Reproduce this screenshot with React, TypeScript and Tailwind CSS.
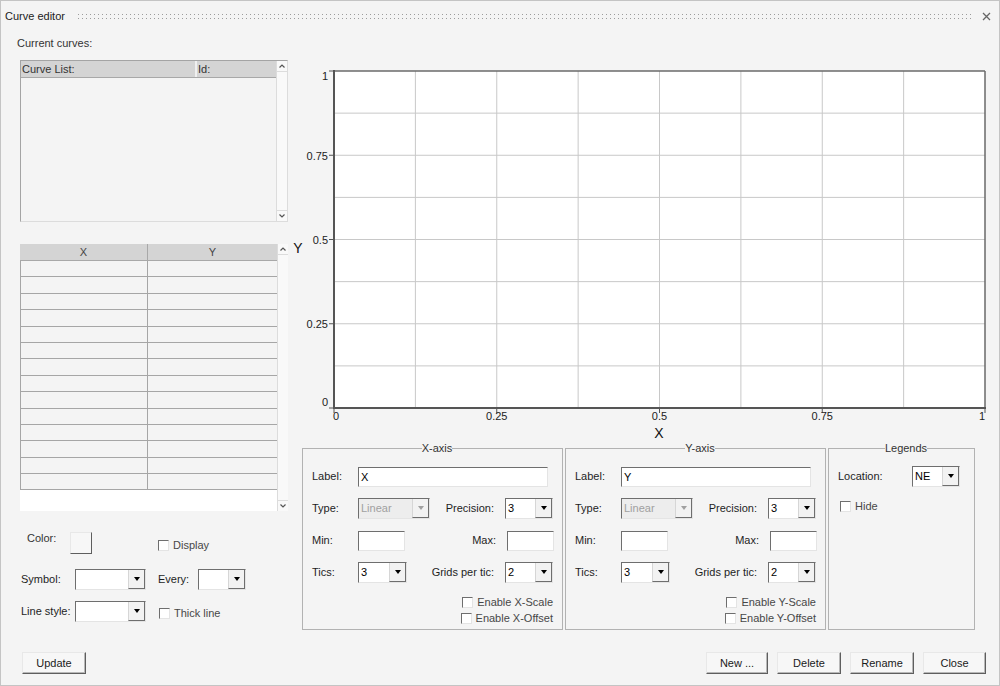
import React from 'react'

const sunken = 'border border-t-[#6e6e6e] border-l-[#6e6e6e] border-r-[#e4e4e4] border-b-[#e4e4e4]'

function Arrow({ disabled = false }: { disabled?: boolean }) {
  return (
    <span
      className={`inline-block border-x-[3.5px] border-t-[4px] border-x-transparent ${disabled ? 'border-t-[#a0a0a0]' : 'border-t-black'}`}
    />
  )
}

function Combo({ className = '', value = '', disabled = false }: { className?: string; value?: string; disabled?: boolean }) {
  return (
    <div className={`flex h-[21px] ${sunken} ${disabled ? 'bg-[#ededed]' : 'bg-white'} ${className}`}>
      <span className={`flex-1 pl-[2px] text-[11px] leading-[19px] ${disabled ? 'text-[#a0a0a0]' : 'text-black'}`}>{value}</span>
      <span className="flex w-[17px] items-center justify-center border-l border-r border-b border-l-[#d6d6d6] border-r-[#6e6e6e] border-b-[#6e6e6e] bg-[#f2f2f2]">
        <Arrow disabled={disabled} />
      </span>
    </div>
  )
}

function Field({ className = '', value = '' }: { className?: string; value?: string }) {
  return (
    <div className={`h-[20px] bg-white ${sunken} pl-[2px] text-[11px] leading-[18px] text-black ${className}`}>{value}</div>
  )
}

function Check({ label, className = '' }: { label: string; className?: string }) {
  return (
    <div className={`flex items-center ${className}`}>
      <span className={`h-[11px] w-[11px] bg-white ${sunken}`} />
      <span className="ml-[4px] text-[11px] leading-[13px] text-[#474747]">{label}</span>
    </div>
  )
}

function Button({ label, className = '' }: { label: string; className?: string }) {
  return (
    <button className={`h-[22px] border border-t-[#e8e8e8] border-l-[#e8e8e8] border-r-[#5e5e5e] border-b-[#5e5e5e] bg-[#f7f7f7] text-[11px] text-[#1a1a1a] shadow-[inset_-1px_-1px_0_#b8b8b8] ${className}`}>
      {label}
    </button>
  )
}

function VScroll() {
  return (
    <div className="flex w-[11px] flex-col border-l border-[#dcdcdc] bg-[#f9f9f9]">
      <div className="flex h-[11px] items-center justify-center border-b border-[#dcdcdc]">
        <svg width="6" height="4" viewBox="0 0 6 4"><path d="M0.5 3.5 L3 1 L5.5 3.5" fill="none" stroke="#555" strokeWidth="1.2" /></svg>
      </div>
      <div className="flex-1" />
      <div className="flex h-[11px] items-center justify-center border-t border-[#dcdcdc]">
        <svg width="6" height="4" viewBox="0 0 6 4"><path d="M0.5 0.5 L3 3 L5.5 0.5" fill="none" stroke="#555" strokeWidth="1.2" /></svg>
      </div>
    </div>
  )
}

function Chart() {
  const L = 43
  const T = 10
  const R = 694
  const B = 347
  const xs = Array.from({ length: 9 }, (_, i) => L + ((R - L) * i) / 8)
  const ys = Array.from({ length: 9 }, (_, i) => T + ((B - T) * i) / 8)
  const yLabels = [
    { t: '1', y: 19 },
    { t: '0.75', y: 99 },
    { t: '0.5', y: 183 },
    { t: '0.25', y: 267 },
    { t: '0', y: 345 },
  ]
  const xLabels = [
    { t: '0', x: 45 },
    { t: '0.25', x: xs[2] },
    { t: '0.5', x: xs[4] },
    { t: '0.75', x: xs[6] },
    { t: '1', x: 691 },
  ]
  return (
    <svg width="710" height="380" className="block" fontFamily="'Liberation Sans', Arial, sans-serif">
      <rect x={L} y={T} width={R - L} height={B - T} fill="#ffffff" />
      {xs.slice(1, 8).map((x, i) => (
        <line key={'gx' + i} x1={x} y1={T} x2={x} y2={B} stroke="#c8c8c8" strokeWidth="1" />
      ))}
      {ys.slice(1, 8).map((y, i) => (
        <line key={'gy' + i} x1={L} y1={y} x2={R} y2={y} stroke="#c8c8c8" strokeWidth="1" />
      ))}
      <line x1={L} y1={T} x2={R} y2={T} stroke="#6a6a6a" strokeWidth="1.5" />
      <line x1={R} y1={T} x2={R} y2={B} stroke="#6a6a6a" strokeWidth="1.5" />
      <line x1={L} y1={T - 1} x2={L} y2={B + 1} stroke="#555" strokeWidth="2" />
      <line x1={L - 1} y1={B} x2={R + 1} y2={B} stroke="#555" strokeWidth="2" />
      {[0, 2, 4, 6, 8].map((i) => (
        <line key={'ty' + i} x1={L - 5} y1={ys[i]} x2={L} y2={ys[i]} stroke="#555" strokeWidth="1" />
      ))}
      {[0, 2, 4, 6, 8].map((i) => (
        <line key={'tx' + i} x1={xs[i]} y1={B} x2={xs[i]} y2={B + 5} stroke="#555" strokeWidth="1" />
      ))}
      {yLabels.map((l) => (
        <text key={'yl' + l.t} x={37} y={l.y} textAnchor="end" fontSize="11" fill="#222">{l.t}</text>
      ))}
      {xLabels.map((l) => (
        <text key={'xl' + l.t} x={l.x} y={359} textAnchor="middle" fontSize="11" fill="#222">{l.t}</text>
      ))}
      <text x={7} y={192} textAnchor="middle" fontSize="14" fill="#111">Y</text>
      <text x={368} y={377} textAnchor="middle" fontSize="14" fill="#111">X</text>
    </svg>
  )
}

function AxisGroup({ name, axis, className = '' }: { name: string; axis: string; className?: string }) {
  return (
    <fieldset className={`h-[188px] border border-[#b2b2b2] pl-[9px] ${className}`}>
      <legend align="center" className="mx-auto text-[11px] leading-[13px] text-[#333]">{name}</legend>
      <div className="flex flex-col gap-[11px] pt-[11px]">
        <div className="flex h-[21px] items-center pr-[14px]">
          <span className="w-[46px]">Label:</span>
          <Field className="w-[190px]" value={axis} />
        </div>
        <div className="flex h-[21px] items-center pr-[9px]">
          <span className="w-[46px]">Type:</span>
          <Combo className="w-[72px]" value="Linear" disabled />
          <span className="flex-1" />
          <span className="mr-[11px]">Precision:</span>
          <Combo className="w-[48px]" value="3" />
        </div>
        <div className="flex h-[21px] items-center pr-[8px]">
          <span className="w-[46px]">Min:</span>
          <Field className="w-[47px]" />
          <span className="flex-1" />
          <span className="mr-[11px]">Max:</span>
          <Field className="w-[47px]" />
        </div>
        <div className="flex h-[21px] items-center pr-[9px]">
          <span className="w-[46px]">Tics:</span>
          <Combo className="w-[49px]" value="3" />
          <span className="flex-1" />
          <span className="mr-[11px]">Grids per tic:</span>
          <Combo className="w-[48px]" value="2" />
        </div>
      </div>
      <div className="mt-[13px] flex flex-col items-end gap-[3px] pr-[9px]">
        <Check label={`Enable ${axis}-Scale`} />
        <Check label={`Enable ${axis}-Offset`} />
      </div>
    </fieldset>
  )
}

export default function App() {
  return (
    <div className="flex h-[686px] w-[1000px] flex-col overflow-hidden border border-[#c4c4c4] bg-[#f4f4f4] font-['Liberation_Sans',Arial,sans-serif] text-[11px] text-[#1e1e1e]">
      {/* title bar */}
      <div className="flex h-[31px] shrink-0 items-center pl-[4px] pr-[8px]">
        <span className="text-[11px] text-[#222]">Curve editor</span>
        <div className="ml-[13px] mr-[9px] flex flex-1 flex-col gap-[3px]">
          <div className="h-[1px] bg-[repeating-linear-gradient(90deg,#9c9c9c_0_1px,transparent_1px_4px)]" />
          <div className="h-[1px] bg-[repeating-linear-gradient(90deg,#9c9c9c_0_1px,transparent_1px_4px)]" />
        </div>
        <svg width="9" height="9" viewBox="0 0 9 9"><path d="M1 1 L8 8 M8 1 L1 8" stroke="#666" strokeWidth="1.3" /></svg>
      </div>

      <div className="flex h-[600px] shrink-0">
        {/* left column */}
        <div className="flex w-[288px] shrink-0 flex-col pl-[19px] pt-[5px]">
          <span className="-ml-[3px] leading-[13px] text-[#333]">Current curves:</span>

          <div className="mt-[10px] flex h-[162px] w-[268px] border border-t-[#a4a4a4] border-l-[#a4a4a4] border-r-[#dcdcdc] border-b-[#dcdcdc]">
            <div className="flex flex-1 flex-col">
              <div className="flex h-[17px] border-b border-[#a8a8a8] bg-[#d4d4d4] leading-[16px] text-[#333]">
                <span className="w-[176px] border-r-2 border-[#f0f0f0] pl-[1px]">Curve List:</span>
                <span className="flex-1 pl-[1px]">Id:</span>
              </div>
              <div className="flex-1" />
            </div>
            <VScroll />
          </div>

          <div className="mt-[22px] flex h-[267px] w-[268px]">
            <div className="flex flex-1 flex-col">
              <div className="flex h-[17px] border-b border-[#a8a8a8] bg-[#d4d4d4] leading-[16px] text-[#444]">
                <span className="w-[128px] border-r border-[#a8a8a8] text-center">X</span>
                <span className="flex-1 text-center">Y</span>
              </div>
              {Array.from({ length: 14 }, (_, i) => (
                <div key={i} className="flex h-[16.4px] border-b border-[#a6a6a6] bg-[#f4f4f4]">
                  <span className="w-[128px] border-r border-l border-[#a6a6a6]" />
                  <span className="flex-1" />
                </div>
              ))}
              <div className="flex-1 bg-white" />
            </div>
            <VScroll />
          </div>

          <div className="mt-[21px] flex h-[22px]">
            <span className="w-[50px] pl-[7px] leading-[13px] text-[#333]">Color:</span>
            <span className="h-[22px] w-[22px] border border-t-[#e8e8e8] border-l-[#e8e8e8] border-r-[#5e5e5e] border-b-[#5e5e5e] bg-[#f7f7f7]" />
            <Check label="Display" className="ml-[66px] mt-[7px] self-start" />
          </div>

          <div className="mt-[15px] flex h-[21px] items-center">
            <span className="w-[55px] pl-[1px]">Symbol:</span>
            <Combo className="w-[71px]" />
            <span className="ml-[12px] w-[40px]">Every:</span>
            <Combo className="w-[48px]" />
          </div>

          <div className="mt-[11px] flex h-[21px] items-center">
            <span className="w-[55px] pl-[1px]">Line style:</span>
            <Combo className="w-[71px]" />
            <Check label="Thick line" className="ml-[13px] mt-[3px]" />
          </div>
        </div>

        {/* right column */}
        <div className="flex flex-1 flex-col pt-[29px]">
          <div className="ml-[2px]">
            <Chart />
          </div>
          <div className="mt-[1px] flex gap-[2px] pl-[13px]">
            <AxisGroup name="X-axis" axis="X" className="w-[261px]" />
            <AxisGroup name="Y-axis" axis="Y" className="w-[260px]" />
            <fieldset className="h-[188px] w-[147px] border border-[#b2b2b2] pl-[9px]">
              <legend align="center" className="mx-auto text-[11px] leading-[13px] text-[#333]">Legends</legend>
              <div className="mt-[11px] flex h-[21px] items-center">
                <span className="w-[74px]">Location:</span>
                <Combo className="w-[48px]" value="NE" />
              </div>
              <Check label="Hide" className="ml-[2px] mt-[13px]" />
            </fieldset>
          </div>
        </div>
      </div>

      {/* bottom buttons */}
      <div className="flex pt-[20px] pl-[21px] pr-[13px]">
        <Button label="Update" className="w-[64px]" />
        <span className="flex-1" />
        <div className="flex gap-[9px]">
          <Button label="New ..." className="w-[62px]" />
          <Button label="Delete" className="w-[64px]" />
          <Button label="Rename" className="w-[64px]" />
          <Button label="Close" className="w-[63px]" />
        </div>
      </div>
    </div>
  )
}
